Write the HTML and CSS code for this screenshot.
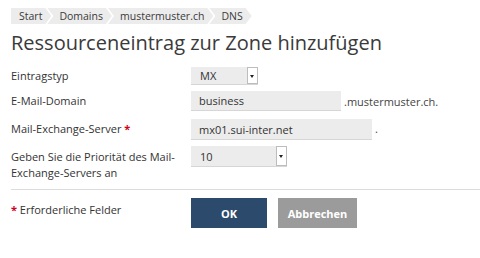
FILE: index.html
```html
<!DOCTYPE html>
<html lang="de">
<head>
    <meta charset="UTF-8">
    <title>Ressourceneintrag zur Zone hinzufügen</title>
    <link rel="stylesheet" href="styles.css">
</head>
<body>
    <div class="page">
        <ul class="breadcrumb">
            <li class="crumb first">Start</li>
            <li class="crumb">Domains</li>
            <li class="crumb">mustermuster.ch</li>
            <li class="crumb">DNS</li>
        </ul>

        <h1 class="title">Ressourceneintrag zur Zone hinzufügen</h1>

        <form class="record-form">
            <div class="form-row">
                <label class="form-label">Eintragstyp</label>
                <div class="form-field">
                    <div class="select select-type">
                        <span class="select-value">MX</span>
                        <span class="select-button"></span>
                    </div>
                </div>
            </div>

            <div class="form-row">
                <label class="form-label">E-Mail-Domain</label>
                <div class="form-field">
                    <input class="text-input input-domain" type="text" value="business">
                    <span class="suffix">.mustermuster.ch.</span>
                </div>
            </div>

            <div class="form-row">
                <label class="form-label">Mail-Exchange-Server <span class="required">*</span></label>
                <div class="form-field">
                    <input class="text-input input-server" type="text" value="mx01.sui-inter.net">
                    <span class="suffix">.</span>
                </div>
            </div>

            <div class="form-row row-priority">
                <label class="form-label">Geben Sie die Priorität des Mail-Exchange-Servers an</label>
                <div class="form-field">
                    <div class="select select-priority">
                        <span class="select-value">10</span>
                        <span class="select-button"></span>
                    </div>
                </div>
            </div>

            <div class="form-footer">
                <div class="form-label"><span class="required">*</span> Erforderliche Felder</div>
                <div class="buttons">
                    <button type="button" class="btn btn-primary">OK</button>
                    <button type="button" class="btn btn-secondary">Abbrechen</button>
                </div>
            </div>
        </form>
    </div>
</body>
</html>
```

FILE: styles.css
```css
* {
    margin: 0;
    padding: 0;
    box-sizing: border-box;
}

body {
    font-family: "Open Sans", "Liberation Sans", sans-serif;
    font-size: 11px;
    color: #333;
    background: #fff;
}

.page {
    padding: 8px 0 0 11px;
}

/* Breadcrumb */
.breadcrumb {
    list-style: none;
    display: flex;
    height: 16px;
}

.crumb {
    background: #ececec;
    height: 16px;
    line-height: 16px;
    font-size: 10.5px;
    padding: 0 9px 0 12px;
    margin-right: -4px;
    color: #3a3a3a;
    clip-path: polygon(0 0, calc(100% - 6px) 0, 100% 50%, calc(100% - 6px) 100%, 0 100%, 6px 50%);
}

.crumb.first {
    padding-left: 8px;
    clip-path: polygon(0 0, calc(100% - 6px) 0, 100% 50%, calc(100% - 6px) 100%, 0 100%);
}

/* Title */
.title {
    font-size: 20px;
    font-weight: 400;
    line-height: 26px;
    color: #3a3a3a;
    margin-top: 6px;
    margin-bottom: 11px;
}

/* Form */
.form-row {
    display: grid;
    grid-template-columns: 180px 1fr;
    align-items: center;
    margin-bottom: 6px;
}

.form-row.row-priority {
    align-items: start;
    margin-top: 5px;
}

.form-label {
    line-height: 16px;
}

.required {
    color: #d0021b;
    font-weight: 700;
}

.form-field {
    display: flex;
    align-items: center;
}

.text-input {
    font-family: inherit;
    font-size: 11px;
    color: #333;
    background: #ececec;
    border: none;
    border-bottom: 1px solid #d6d6d6;
    height: 20px;
    padding: 0 8px;
    outline: none;
}

.input-domain {
    width: 150px;
}

.input-server {
    width: 181px;
    height: 21px;
    margin-top: 2px;
}

.suffix {
    margin-left: 3px;
    color: #444;
}

.select {
    display: flex;
    background: #ececec;
    border-bottom: 1px solid #d6d6d6;
    height: 18px;
}

.select-type {
    width: 67px;
}

.select-priority {
    width: 96px;
    height: 21px;
}

.select-value {
    flex-grow: 1;
    line-height: 18px;
    padding-left: 9px;
}

.select-priority .select-value {
    line-height: 21px;
}

.select-button {
    width: 11px;
    background: #fff;
    border: 1px solid #bdbdbd;
    position: relative;
}

.select-button::after {
    content: "";
    position: absolute;
    left: 2px;
    top: 50%;
    margin-top: -1px;
    border-left: 2.5px solid transparent;
    border-right: 2.5px solid transparent;
    border-top: 3px solid #222;
}

.row-priority .form-label {
    padding-top: 3px;
    padding-right: 10px;
}

.form-footer {
    display: grid;
    grid-template-columns: 180px 1fr;
    border-top: 1px solid #dcdcdc;
    margin-top: 8px;
    padding-top: 8px;
}

.form-footer .form-label {
    padding-top: 4px;
    font-size: 11px;
}

.buttons {
    display: flex;
    gap: 11px;
}

.btn {
    font-family: inherit;
    font-size: 11px;
    font-weight: 700;
    color: #fff;
    border: none;
    height: 30px;
    cursor: pointer;
}

.btn-primary {
    background: #2c4a6b;
    width: 76px;
}

.btn-secondary {
    background: #9b9b9b;
    width: 79px;
}
```
